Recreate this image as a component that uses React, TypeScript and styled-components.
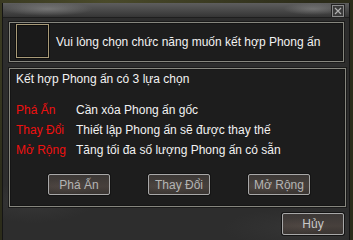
import React from "react";
import styled, { createGlobalStyle } from "styled-components";

const Global = createGlobalStyle`
  html, body { margin: 0; padding: 0; }
  body {
    width: 353px; height: 240px; overflow: hidden;
    background: radial-gradient(circle at 30% 0%, #4a4a2a 0, #2c2c1a 60%), #2c2c1a;
    font-family: "Liberation Sans", Arial, sans-serif;
    -webkit-font-smoothing: none;
  }
`;

const Window = styled.div`
  margin: 3px 3px 0 2px;
  width: 348px;
  height: 237px;
  box-sizing: border-box;
  border-left: 1px solid #151515;
  border-right: 1px solid #151515;
  background:
    radial-gradient(ellipse 60px 20px at 30px 200px, rgba(70,70,70,0.35), transparent),
    radial-gradient(ellipse 80px 20px at 300px 225px, rgba(70,70,70,0.3), transparent),
    #2d2d2d;
  display: flex;
  flex-direction: column;
`;

const TitleBar = styled.div`
  height: 15px;
  flex: none;
  position: relative;
  border-bottom: 1px solid #1e1e1e;
  box-sizing: border-box;
  background:
    radial-gradient(ellipse 45px 7px at 45px 6px, rgba(150,150,150,0.55), transparent),
    radial-gradient(ellipse 30px 6px at 310px 6px, rgba(150,150,150,0.5), transparent),
    linear-gradient(#5e5e5e, #4a4a4a 50%, #353535);
  display: flex;
  justify-content: flex-end;
  align-items: flex-start;
  padding: 2px 5px 0 0;
`;

const CloseButton = styled.div`
  width: 12px;
  height: 12px;
  box-sizing: border-box;
  border: 1px solid #8c8c8c;
  background: #3a3a3a;
  box-shadow: 0 0 0 1px #222;
  display: flex;
  align-items: center;
  justify-content: center;
`;

const Content = styled.div`
  padding: 4px 0 0 6px;
  display: flex;
  flex-direction: column;
`;

const Box = styled.div<{ $w: number; $h: number }>`
  width: ${(p) => p.$w}px;
  height: ${(p) => p.$h}px;
  box-sizing: border-box;
  border: 1px solid #86867e;
  box-shadow: 0 0 0 1px #1a1a1a, inset 0 0 0 1px #151515;
  background: #1d1d1d;
`;

const HeaderBox = styled(Box)`
  display: flex;
  align-items: center;
  padding-left: 6px;
  gap: 7px;
`;

const IconSlot = styled.div`
  width: 33px;
  height: 34px;
  align-self: flex-start;
  margin-top: 1px;
  box-sizing: border-box;
  border: 1px solid #a89a78;
  box-shadow: 0 0 0 1px #0e0e0e, inset 0 0 0 1px #0e0e0e;
  background: #1a1a1a;
`;

const Text = styled.span<{ $color?: string }>`
  color: ${(p) => p.$color || "#f2f2f2"};
  font-size: 12px;
  line-height: 20px;
  white-space: nowrap;
`;

const ChoiceBox = styled(Box)`
  margin-top: 6px;
  padding: 0 0 0 6px;
  display: flex;
  flex-direction: column;
`;

const Rows = styled.div`
  margin-top: 11px;
  display: flex;
  flex-direction: column;
`;

const Row = styled.div`
  display: grid;
  grid-template-columns: 60px auto;
`;

const ButtonRow = styled.div`
  margin-top: 14px;
  padding-left: 32px;
  display: flex;
  gap: 38px;
`;

const Btn = styled.div<{ $h?: number; $light?: boolean }>`
  width: 62px;
  height: ${(p) => p.$h || 21}px;
  box-sizing: border-box;
  border: 1px solid #a8a8a8;
  border-radius: 2px;
  box-shadow: 0 0 0 1px #141414;
  background:
    radial-gradient(ellipse 30px 8px at 30% 60%, rgba(90,80,75,0.4), transparent),
    linear-gradient(#3c3836, #47403c 60%, #3a3532);
  color: ${(p) => (p.$light ? "#c8c8c8" : "#b4b4b4")};
  font-size: 12px;
  display: flex;
  align-items: center;
  justify-content: center;
  white-space: nowrap;
`;

const Footer = styled.div`
  margin-top: 6px;
  padding-right: 5px;
  display: flex;
  justify-content: flex-end;
`;

const rows = [
  ["Phá Ấn", "Cần xóa Phong ấn gốc"],
  ["Thay Đổi", "Thiết lập Phong ấn sẽ được thay thế"],
  ["Mở Rộng", "Tăng tối đa số lượng Phong ấn có sẵn"],
];

export default function App() {
  return (
    <>
      <Global />
      <Window>
        <TitleBar>
          <CloseButton>
            <svg width="8" height="8" viewBox="0 0 8 8">
              <path d="M1 1L7 7M7 1L1 7" stroke="#b0b0b0" strokeWidth="1.2" />
            </svg>
          </CloseButton>
        </TitleBar>
        <Content>
          <HeaderBox $w={335} $h={40}>
            <IconSlot />
            <Text>Vui lòng chọn chức năng muốn kết hợp Phong ấn</Text>
          </HeaderBox>
          <ChoiceBox $w={337} $h={139}>
            <Text>Kết hợp Phong ấn có 3 lựa chọn</Text>
            <Rows>
              {rows.map(([a, b]) => (
                <Row key={a}>
                  <Text $color="#f01010">{a}</Text>
                  <Text>{b}</Text>
                </Row>
              ))}
            </Rows>
            <ButtonRow>
              <Btn>Phá Ấn</Btn>
              <Btn>Thay Đổi</Btn>
              <Btn>Mở Rộng</Btn>
            </ButtonRow>
          </ChoiceBox>
          <Footer>
            <Btn $h={22} $light>Hủy</Btn>
          </Footer>
        </Content>
      </Window>
    </>
  );
}
